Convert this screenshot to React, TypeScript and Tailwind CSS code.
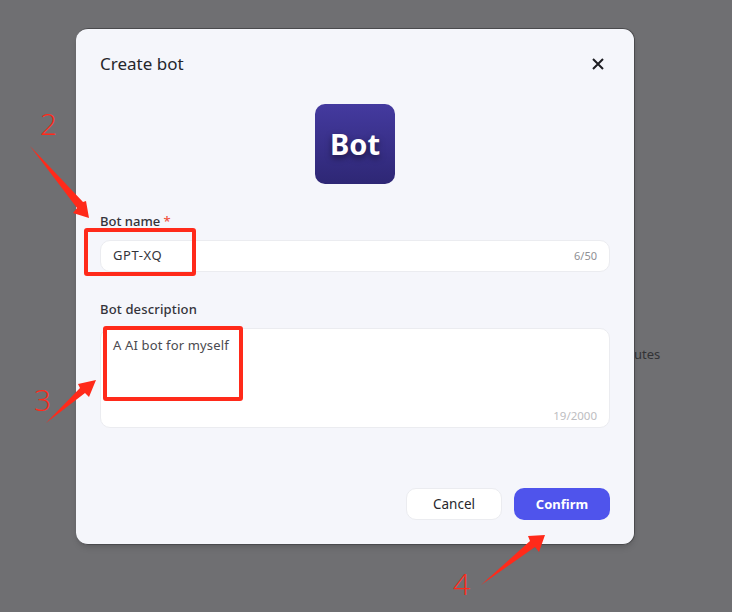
const font = "font-['Noto_Sans','Open_Sans',sans-serif]";

function Annotations() {
  return (
    <>
      <svg className="absolute left-0 top-0 pointer-events-none" width="732" height="612" fill="#ff2a1a">
        <polygon points="30,146 83,202 86,201 89,218 73,213 77,208" />
        <polygon points="46,423 80,388 78,384 96,380 89,397 85,393" />
        <polygon points="481,585 530,541 528,536 545,535 539,552 535,547" />
      </svg>
      <div className="absolute left-[84px] top-[228px] w-[112px] h-[48px] border-4 border-[#ff2a1a] rounded-[3px]" />
      <div className="absolute left-[103px] top-[326px] w-[140px] h-[75px] border-4 border-[#ff2a1a] rounded-[3px]" />
      <span className="absolute left-[40px] top-[104px] text-[30px] leading-[40px] font-[350] text-[#ff2a1a] font-['Open_Sans',sans-serif]">2</span>
      <span className="absolute left-[34px] top-[380px] text-[30px] leading-[40px] font-[350] text-[#ff2a1a] font-['Open_Sans',sans-serif]">3</span>
      <span className="absolute left-[453px] top-[564px] text-[30px] leading-[40px] font-[350] text-[#ff2a1a] font-['Open_Sans',sans-serif]">4</span>
    </>
  );
}

export default function App() {
  return (
    <div className={`relative w-[732px] h-[612px] overflow-hidden bg-[#6f6f72] ${font}`}>
      {/* text of the page behind the overlay */}
      <span className="absolute left-[634px] top-[346px] text-[13px] leading-[16px] text-[#333336]">utes</span>

      <div className="absolute left-[76px] top-[28px] w-[559px] h-[517px] flex flex-col px-6 rounded-[12px] bg-[#f5f6fb] border border-[#4a4a4d] border-l-0 shadow-md">
        <div className="flex items-center justify-between h-[24px] mt-[23px]">
          <h2 className="text-[17px] font-normal text-[#26262b]">Create bot</h2>
          <svg width="16" height="16" viewBox="0 0 16 16" stroke="#1d1d22" strokeWidth="2" className="mr-[4px]">
            <path d="M3 3l10 10M13 3L3 13" />
          </svg>
        </div>

        <div className="self-center mt-[28px] w-[80px] h-[80px] rounded-[10px] flex items-center justify-center bg-gradient-to-b from-[#443a9f] to-[#2e2775]">
          <span className="text-[29px] font-bold text-white [text-shadow:0_3px_6px_rgba(0,0,0,0.5)]">Bot</span>
        </div>

        <label className="mt-[28px] h-[18px] text-[13px] leading-[18px] font-medium text-[#33333a]">
          Bot name <span className="text-[#f0503c]">*</span>
        </label>
        <div className="mt-[10px] h-[32px] flex items-center justify-between px-3 bg-white border border-[#ebecf0] rounded-[10px]">
          <span className="text-[13px] tracking-[0.6px] text-[#33333a]">GPT-XQ</span>
          <span className="text-[11px] text-[#8f8f94]">6/50</span>
        </div>

        <label className="mt-[28px] h-[18px] text-[13px] leading-[18px] tracking-[0.15px] font-medium text-[#33333a]">Bot description</label>
        <div className="mt-[10px] h-[100px] flex flex-col justify-between px-3 pt-[7px] pb-[2px] bg-white border border-[#ebecf0] rounded-[10px]">
          <span className="text-[13px] leading-[18px] tracking-[0.15px] text-[#4a4a50]">A AI bot for myself</span>
          <span className="self-end text-[11.5px] leading-[18px] text-[#bdbdc1]">19/2000</span>
        </div>

        <div className="flex justify-end gap-3 mt-[60px]">
          <button className="w-[96px] h-[32px] pt-px bg-white border border-[#ebecf0] rounded-[10px] text-[13.5px] text-[#26262b]">Cancel</button>
          <button className="w-[96px] h-[32px] pt-px bg-[#4f54ec] rounded-[10px] text-[13px] font-bold text-white">Confirm</button>
        </div>
      </div>

      <Annotations />
    </div>
  );
}
